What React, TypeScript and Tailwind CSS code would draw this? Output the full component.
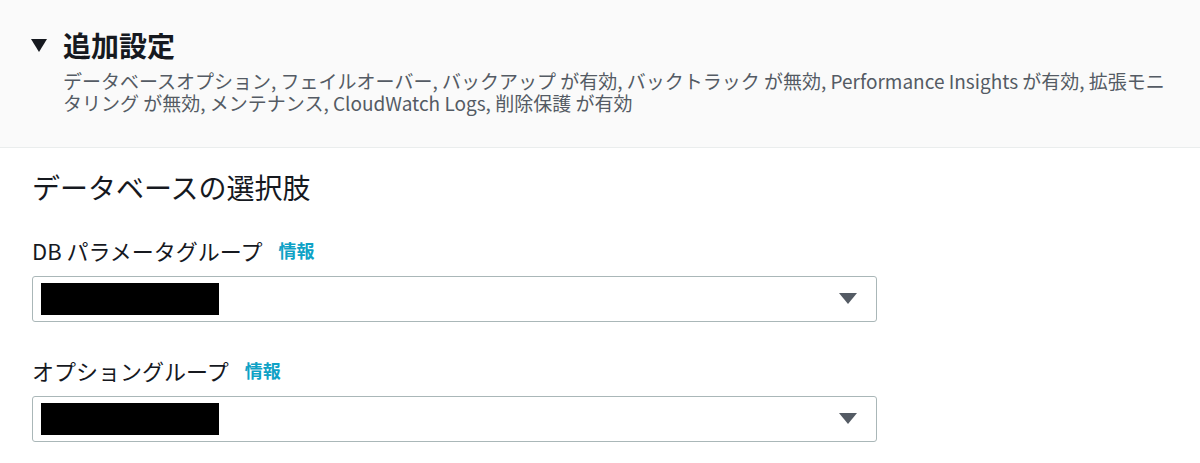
import React from "react";

const font = { fontFamily: '"Noto Sans CJK JP", "Noto Sans", sans-serif' };

function Caret() {
  return (
    <svg width="18" height="12" viewBox="0 0 18 12" className="block">
      <polygon points="0,0 18,0 9,11" fill="#545b64" />
    </svg>
  );
}

function Field({ label }: { label: string }) {
  return (
    <div className="flex flex-col">
      <div className="flex items-center h-[28px]">
        <span className="text-[22px] leading-[28px] text-[#16191f]">{label}</span>
        <span className="ml-[16px] text-[18px] leading-[28px] font-bold text-[#0ea2c6]">情報</span>
      </div>
      <div className="mt-[12px] w-[845px] h-[46px] border border-[#aab7b8] rounded-[3px] bg-white flex items-center justify-between pl-[8px] pr-[19px]">
        <div className="w-[178px] h-[32px] bg-black" />
        <Caret />
      </div>
    </div>
  );
}

export default function App() {
  return (
    <div className="w-[1200px] h-[463px] bg-white overflow-hidden" style={font}>
      <div className="h-[148px] bg-[#fafafa] border-b border-[#eaeded] pt-[28px] pl-[31px]">
        <div className="flex items-center h-[34px]">
          <svg width="16" height="13" viewBox="0 0 16 13" className="block">
            <polygon points="0,0 16,0 8,13" fill="#16191f" />
          </svg>
          <span className="ml-[16px] text-[28px] leading-[34px] font-bold text-[#16191f]">追加設定</span>
        </div>
        <div className="ml-[32px] mt-[8px] w-[1112px] text-[19px] leading-[22px] text-[#545b64]">
          データベースオプション, フェイルオーバー, バックアップ が有効, バックトラック が無効, Performance Insights が有効, 拡張モニタリング が無効, メンテナンス, CloudWatch Logs, 削除保護 が有効
        </div>
      </div>
      <div className="pl-[32px] pt-[21px] flex flex-col">
        <div className="text-[28px] leading-[36px] text-[#16191f]">データベースの選択肢</div>
        <div className="mt-[31px]">
          <Field label="DB パラメータグループ" />
        </div>
        <div className="mt-[34px]">
          <Field label="オプショングループ" />
        </div>
      </div>
    </div>
  );
}
